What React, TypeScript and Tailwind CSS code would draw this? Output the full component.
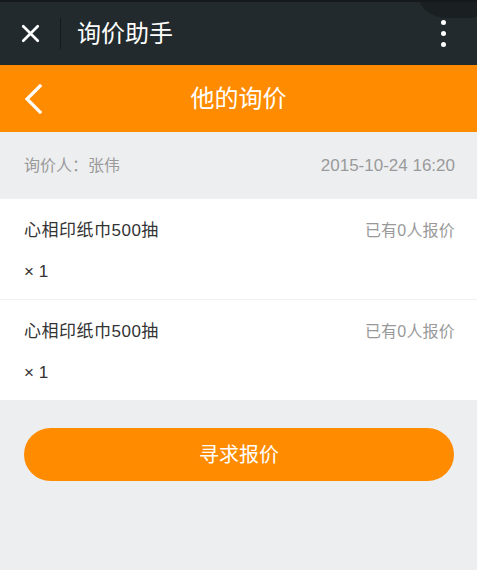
import { X } from 'lucide-react'

const font = { fontFamily: '"Liberation Sans", "Noto Sans CJK SC", sans-serif' }

function Item({ name, count }: { name: string; count: number }) {
  return (
    <div className="h-[100px] bg-white pl-6 pr-[22px] pt-[20px]">
      <div className="flex items-center justify-between h-[24px]">
        <span className="text-[17px] tracking-[0.5px] text-[#333]">{name}</span>
        <span className="text-[16px] tracking-[0.2px] text-[#999]">已有{count}人报价</span>
      </div>
      <div className="mt-[17px] h-[24px] flex items-center text-[17px] text-[#333]">× 1</div>
    </div>
  )
}

export default function App() {
  return (
    <div className="w-[477px] h-[570px] bg-[#edeef0] overflow-hidden" style={font}>
      {/* WeChat top bar */}
      <div className="relative h-[65px] bg-[#222a2d] border-t-2 border-[#15191b] flex items-center overflow-hidden">
        <div className="absolute -top-[40px] -right-[20px] w-[80px] h-[56px] rounded-full bg-[#1a1f21]" />
        <div className="w-[60px] flex justify-center">
          <X className="text-white" size={29} strokeWidth={2.2} />
        </div>
        <div className="w-px h-[31px] bg-[#15191b]" />
        <span className="ml-[16px] text-[24px] text-white">询价助手</span>
        <div className="relative ml-auto mr-[31px] flex flex-col gap-[6px]">
          <span className="w-[5px] h-[5px] rounded-full bg-white" />
          <span className="w-[5px] h-[5px] rounded-full bg-white" />
          <span className="w-[5px] h-[5px] rounded-full bg-white" />
        </div>
      </div>

      {/* Orange header */}
      <div className="relative h-[67px] bg-[#ff8c00] flex items-center justify-center">
        <svg className="absolute left-[22px] top-[18px]" width="22" height="32" viewBox="0 0 22 32">
          <path d="M18 3 L5 16 L18 29" fill="none" stroke="white" strokeWidth="3.2" strokeLinecap="square" />
        </svg>
        <span className="text-[24px] text-white">他的询价</span>
      </div>

      {/* Info row */}
      <div className="h-[67px] pl-6 pr-[22px] flex items-center justify-between text-[#9a9a9a]">
        <span className="text-[16px]">询价人：张伟</span>
        <span className="text-[17px]">2015-10-24 16:20</span>
      </div>

      <Item name="心相印纸巾500抽" count={0} />
      <div className="h-px bg-[#f0f0f2]" />
      <Item name="心相印纸巾500抽" count={0} />

      <div className="pl-6 pr-[23px] pt-[28px]">
        <button className="w-full h-[53px] rounded-full bg-[#ff8c00] text-white text-[20px]">
          寻求报价
        </button>
      </div>
    </div>
  )
}
